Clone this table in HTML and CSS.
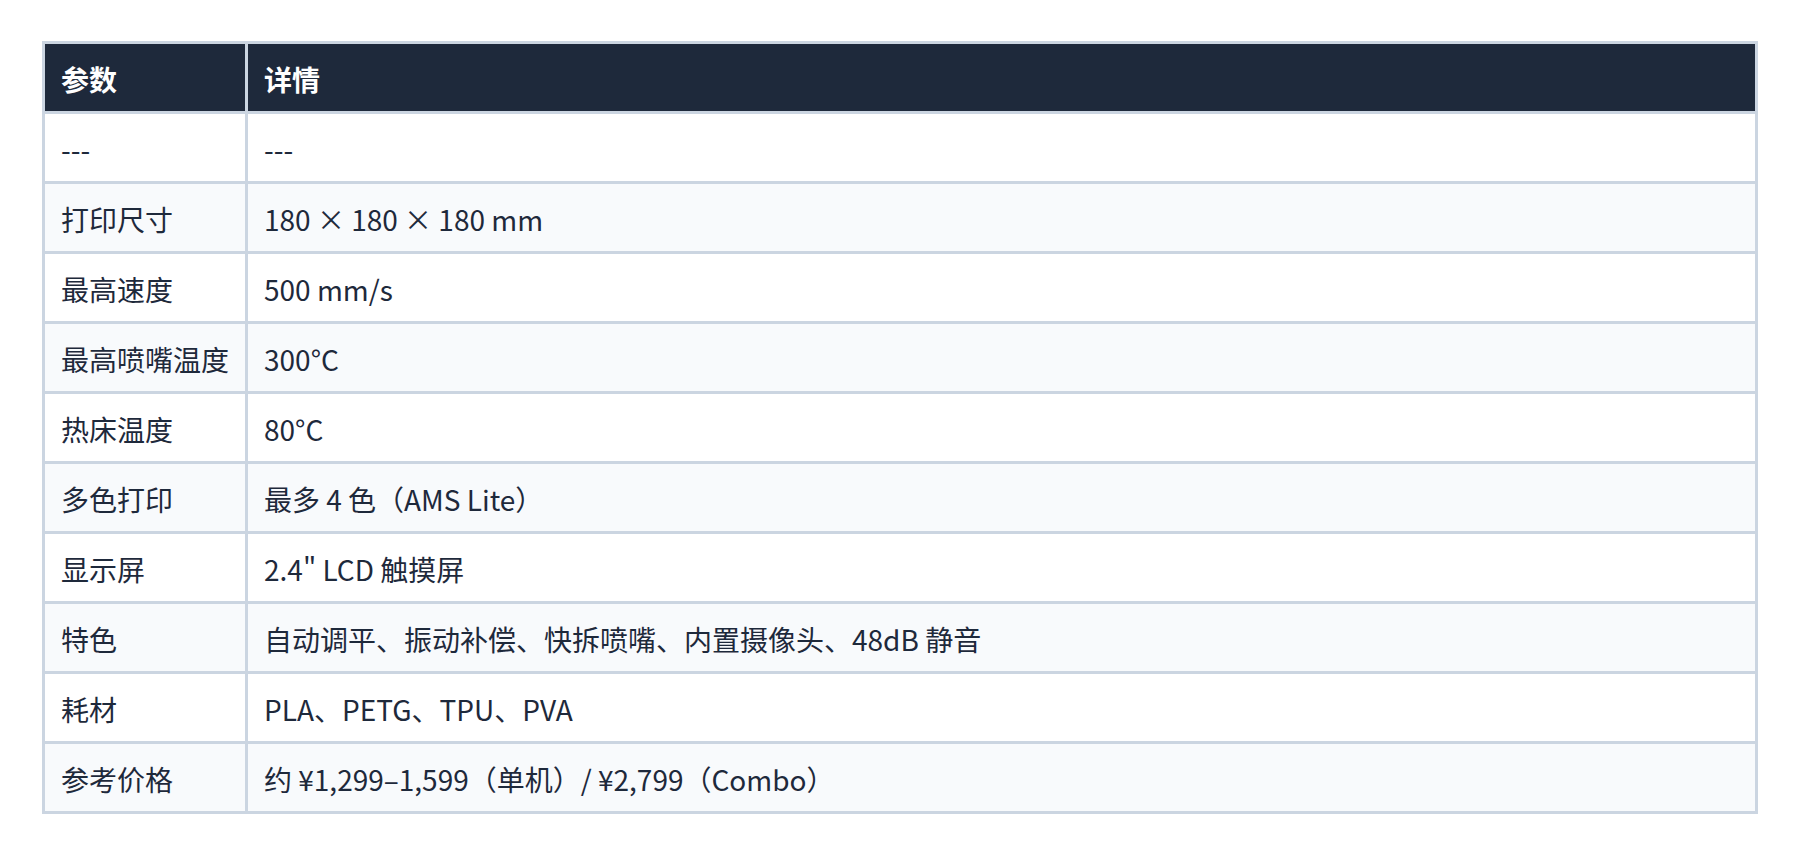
FILE: index.html
```html
<!DOCTYPE html>
<html lang="zh-CN">
<head>
<meta charset="utf-8">
<title>参数</title>
<link rel="stylesheet" href="styles.css">
</head>
<body>
<div class="page">
<table class="spec">
  <thead>
    <tr><th>参数</th><th class="wide">详情</th></tr>
  </thead>
  <tbody>
    <tr><td>---</td><td>---</td></tr>
    <tr><td>打印尺寸</td><td>180 × 180 × 180 mm</td></tr>
    <tr><td>最高速度</td><td>500 mm/s</td></tr>
    <tr><td>最高喷嘴温度</td><td>300°C</td></tr>
    <tr><td>热床温度</td><td>80°C</td></tr>
    <tr><td>多色打印</td><td>最多 4 色（AMS Lite）</td></tr>
    <tr><td>显示屏</td><td>2.4" LCD 触摸屏</td></tr>
    <tr><td>特色</td><td>自动调平、振动补偿、快拆喷嘴、内置摄像头、48dB 静音</td></tr>
    <tr><td>耗材</td><td>PLA、PETG、TPU、PVA</td></tr>
    <tr><td>参考价格</td><td>约 ¥1,299–1,599（单机）/ ¥2,799（Combo）</td></tr>
  </tbody>
</table>
</div>
</body>
</html>
```

FILE: styles.css
```css
html, body {
  margin: 0;
  padding: 0;
  background: #ffffff;
}
.page {
  padding: 41px 42px;
  font-family: "Noto Sans CJK SC", "Noto Sans", sans-serif;
  color: #1e293b;
}
.spec {
  width: 100%;
  border-collapse: collapse;
  font-size: 28px;
  line-height: 33px;
}
.spec th, .spec td {
  border: 3px solid #cbd5e1;
  padding: 19px 16px 15px;
  text-align: left;
  white-space: nowrap;
}
.spec th {
  background: #1e293b;
  color: #ffffff;
  font-weight: 700;
}
.spec th.wide {
  width: 100%;
}
.spec tbody tr:nth-child(odd) td {
  background: #ffffff;
}
.spec tbody tr:nth-child(even) td {
  background: #f8fafc;
}
```
